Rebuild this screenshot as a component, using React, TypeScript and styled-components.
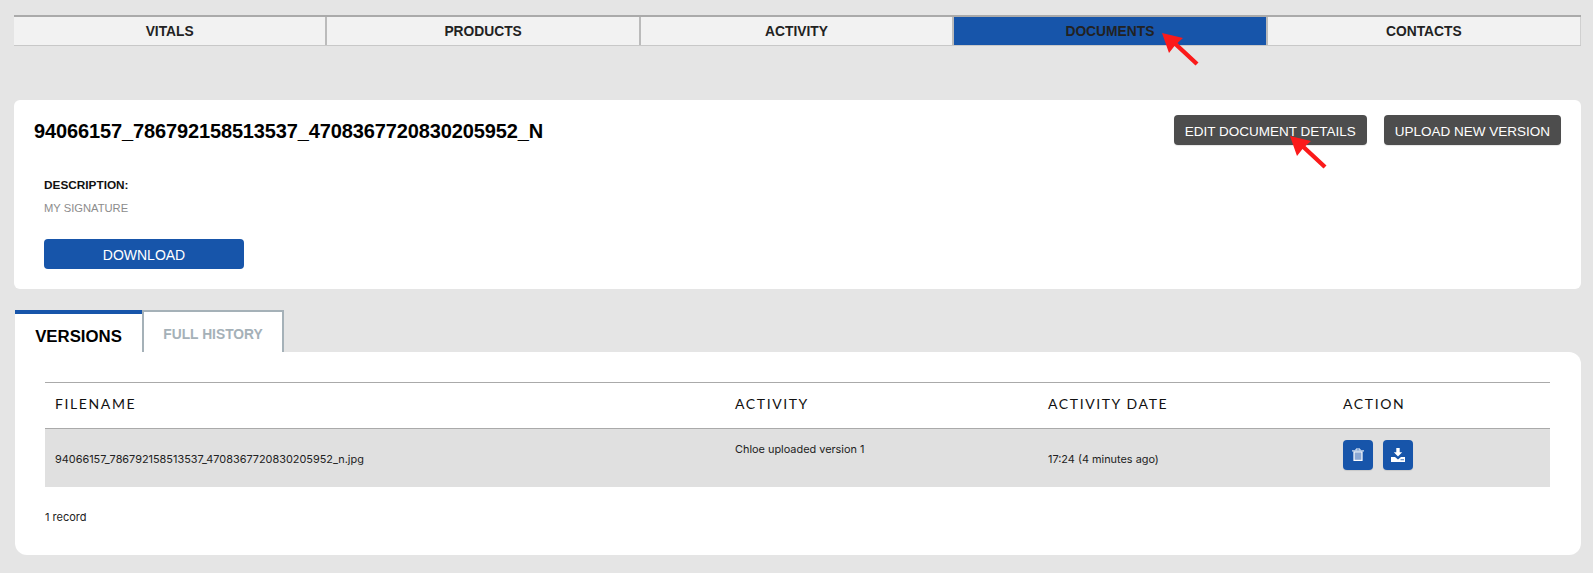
import React from "react";
import styled, { createGlobalStyle } from "styled-components";

const GlobalStyle = createGlobalStyle`
  html, body {
    margin: 0;
    padding: 0;
    background: #e5e5e5;
  }
  body {
    font-family: "Liberation Sans", Arial, sans-serif;
  }
`;

const topTabs = ["VITALS", "PRODUCTS", "ACTIVITY", "DOCUMENTS", "CONTACTS"];

const RedArrow = ({ className }: { className?: string }) => (
  <svg className={className} width="37" height="33" viewBox="0 0 37 33">
    <path d="M0 0 L21 5 L15.5 10 L36.5 29.5 L33.5 32.5 L12.5 13 L7 20 Z" fill="#fb1a1a" />
  </svg>
);

export default function App() {
  return (
    <Page>
      <GlobalStyle />
      <TopNav>
        {topTabs.map((t) => (
          <TopTab key={t} $active={t === "DOCUMENTS"}>
            {t}
            {t === "DOCUMENTS" && <TabArrow />}
          </TopTab>
        ))}
      </TopNav>

      <DocCard>
        <DocHeader>
          <DocTitle>94066157_786792158513537_4708367720830205952_N</DocTitle>
          <DocActions>
            <DarkButton>
              EDIT DOCUMENT DETAILS
              <ButtonArrow />
            </DarkButton>
            <DarkButton>UPLOAD NEW VERSION</DarkButton>
          </DocActions>
        </DocHeader>
        <DocBody>
          <DescLabel>DESCRIPTION:</DescLabel>
          <DescValue>MY SIGNATURE</DescValue>
          <DownloadButton>DOWNLOAD</DownloadButton>
        </DocBody>
      </DocCard>

      <SubTabs>
        <VersionsTab>VERSIONS</VersionsTab>
        <HistoryTab>FULL HISTORY</HistoryTab>
      </SubTabs>

      <TableCard>
        <Table>
          <HeadRow>
            <HeadCell>FILENAME</HeadCell>
            <HeadCell>ACTIVITY</HeadCell>
            <HeadCell>ACTIVITY DATE</HeadCell>
            <HeadCell>ACTION</HeadCell>
          </HeadRow>
          <BodyRow>
            <Cell>94066157_786792158513537_4708367720830205952_n.jpg</Cell>
            <Cell $top>Chloe uploaded version 1</Cell>
            <Cell>17:24 (4 minutes ago)</Cell>
            <ActionCell>
              <IconButton aria-label="Delete">
                <svg width="14" height="14" viewBox="0 0 14 14">
                  <path d="M1 2.4h12v1H1z" fill="#fff" />
                  <path d="M5 2.4V1h4v1.4" fill="none" stroke="#fff" />
                  <path d="M2.4 3.4h9.2V13H2.4z" fill="#fff" />
                  <path d="M3.6 4.4h6.8v7.4H3.6z" fill="#8ba8d3" />
                </svg>
              </IconButton>
              <IconButton aria-label="Download">
                <svg width="14" height="14" viewBox="0 0 14 14">
                  <path d="M5.3 0h3.4v4.2H11.2L7 8.4 2.8 4.2h2.5z" fill="#fff" />
                  <path d="M0 9h4l3 2.4L10 9h4v5H0z" fill="#fff" />
                  <path d="M9.5 11.4h3.5v.8H9.5z" fill="#1755aa" />
                </svg>
              </IconButton>
            </ActionCell>
          </BodyRow>
        </Table>
        <RecordCount>1 record</RecordCount>
      </TableCard>
    </Page>
  );
}

const Page = styled.div`
  width: 1593px;
  height: 573px;
  box-sizing: border-box;
  padding: 15px 12px 0 14px;
  overflow: hidden;
`;

const TopNav = styled.div`
  display: grid;
  grid-template-columns: repeat(5, 1fr);
  height: 31px;
  box-sizing: border-box;
  border-top: 2px solid #aaaaaa;
  border-bottom: 1px solid #c8c8c8;
  background: #f2f2f2;
`;

const TopTab = styled.div<{ $active?: boolean }>`
  position: relative;
  display: flex;
  align-items: center;
  justify-content: center;
  padding-top: 1px;
  font-size: 13.8px;
  font-weight: 700;
  color: #222;
  background: ${(p) => (p.$active ? "#1755aa" : "transparent")};
  border-right: 2px solid #bbbbbb;
  &:last-child {
    border-right: 1px solid #d0d0d0;
  }
`;

const TabArrow = styled(RedArrow)`
  position: absolute;
  left: 208px;
  top: 16px;
`;

const DocCard = styled.div`
  margin-top: 54px;
  height: 189px;
  box-sizing: border-box;
  background: #fff;
  border-radius: 6px;
  padding: 15px 20px 0 20px;
`;

const DocHeader = styled.div`
  display: flex;
  justify-content: space-between;
  align-items: center;
  height: 30px;
`;

const DocTitle = styled.div`
  padding-top: 2px;
  font-size: 20px;
  letter-spacing: -0.13px;
  font-weight: 700;
  color: #000;
`;

const DocActions = styled.div`
  display: flex;
  gap: 17px;
`;

const DarkButton = styled.div`
  position: relative;
  height: 30px;
  box-sizing: border-box;
  display: flex;
  align-items: center;
  padding: 2px 11px 0;
  background: #4d4d4d;
  border-radius: 4px;
  color: #fff;
  font-size: 13.5px;
  box-shadow: 0 1px 1px rgba(0, 0, 0, 0.1);
`;

const ButtonArrow = styled(RedArrow)`
  position: absolute;
  left: 116px;
  top: 21px;
`;

const DocBody = styled.div`
  padding: 33px 0 0 10px;
`;

const DescLabel = styled.div`
  font-size: 11.8px;
  line-height: 14px;
  font-weight: 700;
  color: #111;
`;

const DescValue = styled.div`
  margin-top: 9px;
  font-size: 11.2px;
  line-height: 14px;
  color: #8c8c8c;
`;

const DownloadButton = styled.div`
  margin-top: 24px;
  width: 200px;
  height: 30px;
  box-sizing: border-box;
  display: flex;
  align-items: center;
  justify-content: center;
  padding-top: 2px;
  background: #1755aa;
  border-radius: 4px;
  color: #fff;
  font-size: 14px;
`;

const SubTabs = styled.div`
  display: flex;
  margin: 21px 0 0 1px;
  height: 42px;
`;

const VersionsTab = styled.div`
  width: 127px;
  box-sizing: border-box;
  border-top: 4px solid #1755aa;
  padding-top: 8px;
  background: #fff;
  display: flex;
  align-items: center;
  justify-content: center;
  font-size: 16.8px;
  font-weight: 700;
  color: #000;
`;

const HistoryTab = styled.div`
  width: 142px;
  box-sizing: border-box;
  border: 2px solid #a5b1b8;
  border-bottom: none;
  background: #fff;
  display: flex;
  align-items: center;
  justify-content: center;
  padding-top: 4px;
  font-size: 13.8px;
  font-weight: 700;
  color: #a5b1b8;
`;

const TableCard = styled.div`
  margin-left: 1px;
  height: 203px;
  box-sizing: border-box;
  background: #fff;
  border-radius: 0 12px 12px 12px;
  padding: 30px 31px 0 30px;
`;

const Table = styled.div`
  border-top: 1px solid #aaaaaa;
`;

const gridColumns = "680px 313px 295px 1fr";

const HeadRow = styled.div`
  display: grid;
  grid-template-columns: ${gridColumns};
  height: 46px;
  box-sizing: border-box;
  border-bottom: 1px solid #aaaaaa;
`;

const HeadCell = styled.div`
  padding: 0 0 4px 10px;
  display: flex;
  align-items: center;
  font-family: Lato, "Liberation Sans", sans-serif;
  font-size: 14px;
  letter-spacing: 1.6px;
  color: #111;
`;

const BodyRow = styled.div`
  display: grid;
  grid-template-columns: ${gridColumns};
  height: 58px;
  background: #e0e0e0;
`;

const Cell = styled.div<{ $top?: boolean }>`
  padding: ${(p) => (p.$top ? "13px" : "23px")} 0 0 10px;
  font-family: Inter, "Liberation Sans", sans-serif;
  font-size: 10.9px;
  line-height: 14px;
  color: #222;
`;

const ActionCell = styled.div`
  display: flex;
  gap: 10px;
  padding: 11px 0 0 10px;
`;

const IconButton = styled.div`
  width: 30px;
  height: 30px;
  display: flex;
  align-items: center;
  justify-content: center;
  background: #1755aa;
  border-radius: 4px;
  box-shadow: 0 1px 1px rgba(0, 0, 0, 0.1);
`;

const RecordCount = styled.div`
  margin-top: 23px;
  font-family: Inter, "Liberation Sans", sans-serif;
  font-size: 11px;
  line-height: 14px;
  color: #222;
`;
